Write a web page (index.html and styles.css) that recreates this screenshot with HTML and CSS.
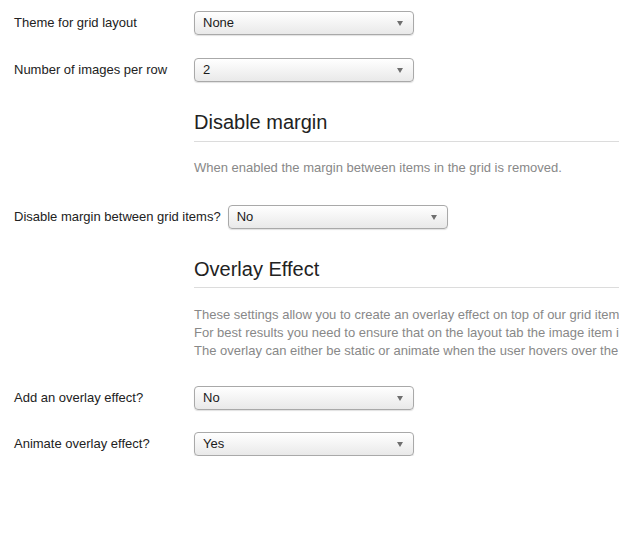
FILE: index.html
```html
<!DOCTYPE html>
<html>
<head>
<meta charset="utf-8">
<link rel="stylesheet" href="styles.css">
</head>
<body>
<div class="page">
  <div class="row row-first">
    <label class="label">Theme for grid layout</label>
    <div class="select"><span class="value">None</span><span class="caret"></span></div>
  </div>
  <div class="row row-gap-lg">
    <label class="label">Number of images per row</label>
    <div class="select"><span class="value">2</span><span class="caret"></span></div>
  </div>

  <div class="section sec-1">
    <h3 class="section-title">Disable margin</h3>
    <p class="section-desc desc-1">When enabled the margin between items in the grid is removed.</p>
  </div>

  <div class="row row-after-desc1">
    <label class="label">Disable margin between grid items?</label>
    <div class="select"><span class="value">No</span><span class="caret"></span></div>
  </div>

  <div class="section sec-2">
    <h3 class="section-title">Overlay Effect</h3>
    <p class="section-desc desc-2">These settings allow you to create an overlay effect on top of our grid items.<br>For best results you need to ensure that on the layout tab the image item is used.<br>The overlay can either be static or animate when the user hovers over the item.</p>
  </div>

  <div class="row row-after-desc2">
    <label class="label">Add an overlay effect?</label>
    <div class="select"><span class="value">No</span><span class="caret"></span></div>
  </div>
  <div class="row row-gap">
    <label class="label">Animate overlay effect?</label>
    <div class="select"><span class="value">Yes</span><span class="caret"></span></div>
  </div>
</div>
</body>
</html>
```

FILE: styles.css
```css
html, body {
  margin: 0;
  padding: 0;
  background: #ffffff;
  overflow: hidden;
}

.page {
  padding-left: 14px;
  font-family: "Liberation Sans", Arial, sans-serif;
  font-size: 13px;
  color: #222222;
  width: 900px;
}

.row {
  display: flex;
  align-items: center;
  gap: 7px;
}

.row-first { margin-top: 11px; }
.row-gap-lg { margin-top: 23px; }
.row-gap { margin-top: 22px; }
.row-after-desc1 { margin-top: 28px; }
.row-after-desc2 { margin-top: 26px; }

.label {
  min-width: 173px;
  line-height: 18px;
  white-space: nowrap;
}

.select {
  box-sizing: border-box;
  width: 220px;
  height: 24px;
  border: 1px solid #a9a9a9;
  border-radius: 4px;
  background: linear-gradient(#ffffff, #f4f4f4 50%, #e9e9e9);
  box-shadow: 0 1px 1px rgba(0, 0, 0, 0.12);
  display: flex;
  align-items: center;
  justify-content: space-between;
  padding: 0 10px 0 8px;
}

.value {
  line-height: 18px;
  color: #1a1a1a;
}

.caret {
  width: 0;
  height: 0;
  border-left: 3.5px solid transparent;
  border-right: 3.5px solid transparent;
  border-top: 5px solid #6f6f6f;
  margin-top: 1px;
}

.section {
  margin-left: 180px;
}

.sec-1 { margin-top: 28px; }
.sec-2 { margin-top: 28px; }

.section-title {
  margin: 0;
  font-size: 20px;
  font-weight: normal;
  line-height: 24px;
  color: #222222;
  padding-bottom: 7px;
  border-bottom: 1px solid #dcdcdc;
}

.sec-2 .section-title { padding-bottom: 6px; }

.section-desc {
  margin: 0;
  color: #888888;
  font-size: 13px;
  line-height: 18px;
  white-space: nowrap;
}

.desc-1 { margin-top: 17px; }
.desc-2 { margin-top: 18px; }
```
